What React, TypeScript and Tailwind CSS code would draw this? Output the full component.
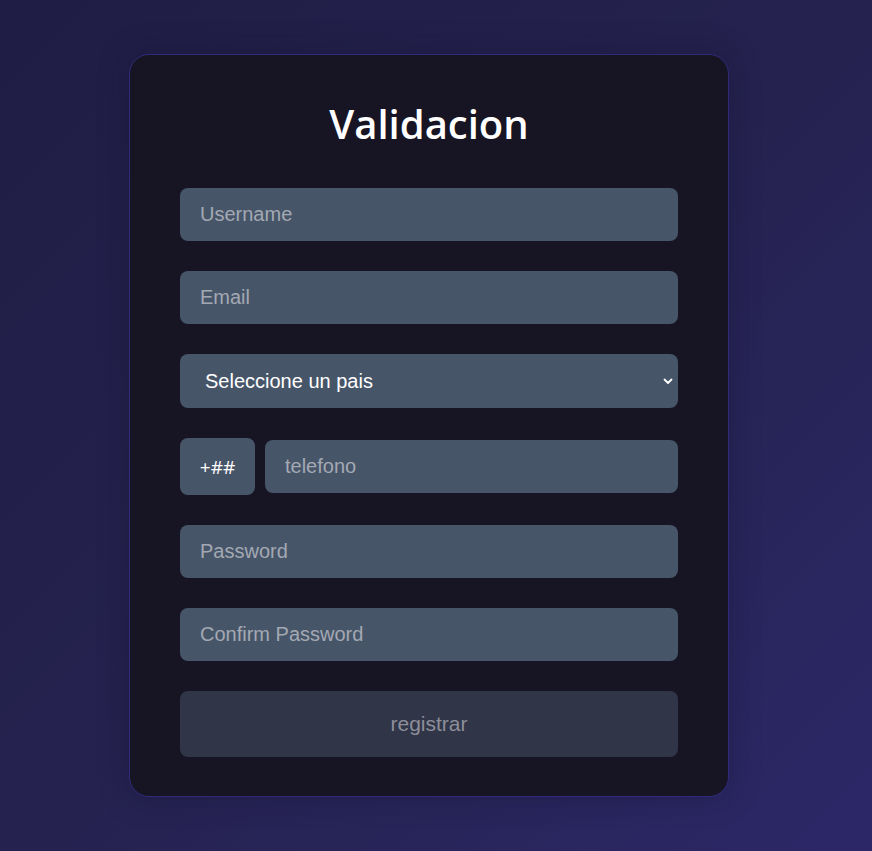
export default function App() {
    const inputCls =
        "w-full h-[53px] rounded-lg bg-[#475569] px-5 text-[20px] text-white placeholder:text-[#a3a9b3] outline-none border-0";

    return (
        <div
            className="min-h-screen w-full bg-[linear-gradient(135deg,#1f1d45_0%,#25224f_50%,#2c2868_100%)] pt-[54px]"
            style={{ fontFamily: '"Liberation Sans", Arial, sans-serif' }}
        >
            <div className="ml-[129px] w-[600px] rounded-[20px] border border-[#2f2b7a] bg-[#171523] px-[50px] pt-[47px] pb-[39px] shadow-[0_0_30px_rgba(20,18,50,0.35)]">
                <h1 className="text-center text-[40px] font-semibold leading-[44px] text-white" style={{ fontFamily: '"Open Sans", "Noto Sans", sans-serif' }}>
                    Validacion
                </h1>

                <form className="mt-[42px] flex flex-col gap-[30px]" onSubmit={(e) => e.preventDefault()}>
                    <input className={inputCls} placeholder="Username" />
                    <input className={inputCls} placeholder="Email" />

                    {/* Country select */}
                    <div className="relative">
                        <select className="h-[54px] w-full appearance-none rounded-lg bg-[#475569] pl-[25px] pr-10 text-[20px] text-white outline-none">
                            <option>Seleccione un pais</option>
                        </select>
                        <svg className="pointer-events-none absolute right-[4px] top-1/2 -translate-y-1/2" width="12" height="12" viewBox="0 0 12 12" fill="none">
                            <path d="M2.5 4.5 6 8l3.5-3.5" stroke="#fff" strokeWidth="1.8" strokeLinecap="round" strokeLinejoin="round" />
                        </svg>
                    </div>

                    {/* Phone */}
                    <div className="flex items-center gap-[10px]">
                        <div
                            className="flex h-[57px] w-[75px] shrink-0 items-center justify-center rounded-lg bg-[#475569] pt-[2px] text-[19px] text-white"
                            style={{ fontFamily: '"Open Sans", "Noto Sans", sans-serif' }}
                        >
                            +##
                        </div>
                        <input className={inputCls} placeholder="telefono" />
                    </div>

                    <input className={inputCls} type="password" placeholder="Password" />
                    <input className={inputCls} type="password" placeholder="Confirm Password" />

                    <button
                        type="submit"
                        className="h-[66px] w-full rounded-lg bg-[#313548] text-[21px] text-[#8c8e9a]"
                    >
                        registrar
                    </button>
                </form>
            </div>
        </div>
    );
}
